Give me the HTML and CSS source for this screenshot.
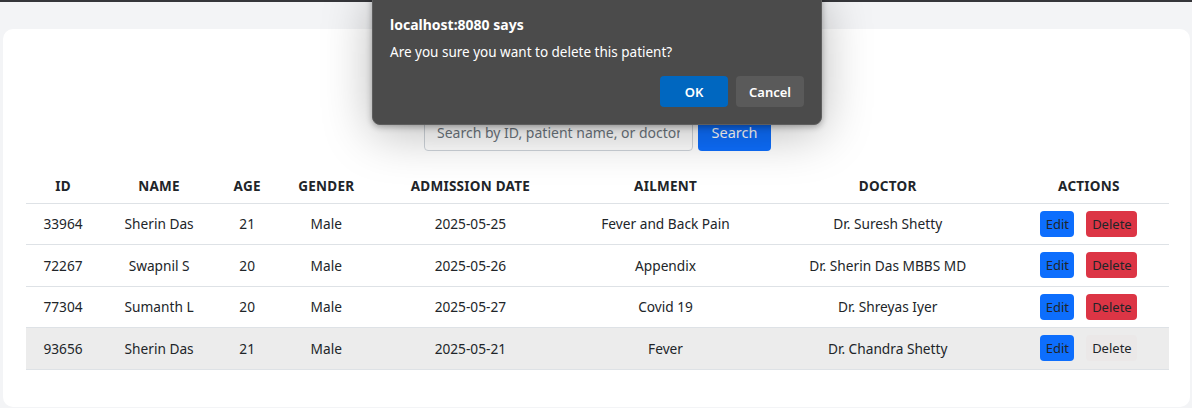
FILE: index.html
```html
<!DOCTYPE html>
<html lang="en">
<head>
<meta charset="utf-8">
<title>Patients</title>
<link rel="stylesheet" href="styles.css">
</head>
<body>
<div class="topbar"></div>
<div class="page">
  <div class="card">
    <div class="title-space"></div>
    <div class="search">
      <input class="search-input" type="text" placeholder="Search by ID, patient name, or doctor name">
      <button class="btn btn-search">Search</button>
    </div>
    <table class="patients">
      <colgroup>
        <col class="c-id"><col class="c-name"><col class="c-age"><col class="c-gender">
        <col class="c-date"><col class="c-ail"><col class="c-doc"><col class="c-act">
      </colgroup>
      <thead>
        <tr><th>ID</th><th>NAME</th><th>AGE</th><th>GENDER</th><th>ADMISSION DATE</th><th>AILMENT</th><th>DOCTOR</th><th>ACTIONS</th></tr>
      </thead>
      <tbody>
        <tr><td>33964</td><td>Sherin Das</td><td>21</td><td>Male</td><td>2025-05-25</td><td>Fever and Back Pain</td><td>Dr. Suresh Shetty</td><td><div class="actions"><button class="btn btn-edit">Edit</button><button class="btn btn-del">Delete</button></div></td></tr>
        <tr><td>72267</td><td>Swapnil S</td><td>20</td><td>Male</td><td>2025-05-26</td><td>Appendix</td><td>Dr. Sherin Das MBBS MD</td><td><div class="actions"><button class="btn btn-edit">Edit</button><button class="btn btn-del">Delete</button></div></td></tr>
        <tr><td>77304</td><td>Sumanth L</td><td>20</td><td>Male</td><td>2025-05-27</td><td>Covid 19</td><td>Dr. Shreyas Iyer</td><td><div class="actions"><button class="btn btn-edit">Edit</button><button class="btn btn-del">Delete</button></div></td></tr>
        <tr class="hover"><td>93656</td><td>Sherin Das</td><td>21</td><td>Male</td><td>2025-05-21</td><td>Fever</td><td>Dr. Chandra Shetty</td><td><div class="actions"><button class="btn btn-edit">Edit</button><button class="btn btn-del pressed">Delete</button></div></td></tr>
      </tbody>
    </table>
  </div>
</div>

<div class="dialog" role="dialog">
  <div class="dlg-title">localhost:8080 says</div>
  <div class="dlg-msg">Are you sure you want to delete this patient?</div>
  <div class="dlg-buttons">
    <button class="dlg-btn dlg-ok">OK</button>
    <button class="dlg-btn dlg-cancel">Cancel</button>
  </div>
</div>
</body>
</html>
```

FILE: styles.css
```css
* { box-sizing: border-box; }
html, body {
  margin: 0;
  height: 100%;
  overflow: hidden;
}
body {
  background: #f3f4f6;
  font-family: "Noto Sans", "Open Sans", sans-serif;
  color: #212529;
}
.topbar {
  height: 2px;
  background: #35363a;
}
.page {
  padding: 27px 2px 0 3px;
}
.card {
  background: #fff;
  border-radius: 10px;
  padding: 24px 21px 0 23px;
  height: 378px;
  overflow: hidden;
}
.title-space {
  height: 44px;
  margin-bottom: 16px;
}
.search {
  display: flex;
  justify-content: center;
  gap: 5px;
  margin-bottom: 19px;
}
.search-input {
  width: 269px;
  height: 38px;
  padding: 6px 12px;
  border: 1px solid #ced4da;
  border-radius: 4px;
  font-family: inherit;
  font-size: 14px;
  color: #212529;
  background: #fff;
}
.search-input::placeholder { color: #6c757d; }
.btn {
  font-family: inherit;
  border: 0;
  border-radius: 4px;
  cursor: pointer;
}
.btn-search {
  width: 73px;
  height: 38px;
  background: #0d6efd;
  color: #fff;
  font-size: 14.5px;
}
.patients {
  width: 100%;
  border-collapse: collapse;
  table-layout: fixed;
  font-size: 13.7px;
}
.c-id { width: 74px; }
.c-name { width: 118px; }
.c-age { width: 58px; }
.c-gender { width: 100px; }
.c-date { width: 188px; }
.c-ail { width: 202px; }
.c-doc { width: 242px; }
.c-act { width: 160px; }
.patients th {
  height: 33px;
  font-weight: 700;
  font-size: 13.5px;
  letter-spacing: 0.25px;
  text-align: center;
  border-bottom: 1px solid #dee2e6;
  padding: 0;
}
.patients td {
  height: 41.5px;
  text-align: center;
  border-bottom: 1px solid #dee2e6;
  padding: 0;
  white-space: nowrap;
}
.patients tr.hover td { background: #ececec; }
.actions {
  display: flex;
  justify-content: center;
  gap: 12px;
}
.btn-edit, .btn-del {
  height: 26px;
  font-size: 13px;
  color: #212529;
  padding: 0;
}
.btn-edit { background: #0d6efd; width: 34px; }
.btn-del { background: #dc3545; width: 51px; }
.btn-del.pressed { background: #ebe8e8; }

.dialog {
  position: absolute;
  left: 372px;
  top: -10px;
  width: 450px;
  height: 135px;
  background: #4b4b4b;
  border: 1px solid #5e5e5e;
  border-radius: 8px;
  box-shadow: 0 8px 50px rgba(0, 0, 0, 0.28), 0 2px 6px rgba(0, 0, 0, 0.3);
  padding: 24px 17px 0 17px;
  color: #fff;
  font-family: "Noto Sans", "Open Sans", sans-serif;
}
.dlg-title {
  font-weight: 700;
  font-size: 14px;
  line-height: 20px;
}
.dlg-msg {
  margin-top: 7px;
  font-size: 13.5px;
  line-height: 20px;
}
.dlg-buttons {
  display: flex;
  justify-content: flex-end;
  gap: 8px;
  margin-top: 14px;
}
.dlg-btn {
  width: 68px;
  height: 31px;
  border: 0;
  border-radius: 4px;
  color: #fff;
  font-family: inherit;
  font-weight: 600;
  font-size: 13px;
}
.dlg-ok { background: #0067c0; }
.dlg-cancel { background: #5a5a5a; }
```
